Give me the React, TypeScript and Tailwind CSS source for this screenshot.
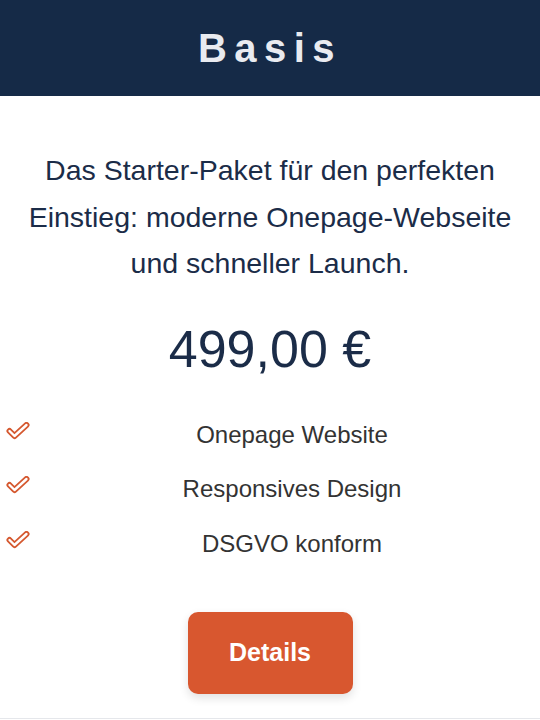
import React from 'react'

const features = ['Onepage Website', 'Responsives Design', 'DSGVO konform']

function CheckIcon() {
  return (
    <svg width="24" height="18" viewBox="0 0 24 18" className="block">
      <path d="M3.5 9 L8.5 14 L20.5 3" fill="none" stroke="#d5582f" strokeWidth="6" strokeLinecap="round" strokeLinejoin="round" />
      <path d="M3.5 9 L8.5 14 L20.5 3" fill="none" stroke="#ffffff" strokeWidth="2.4" strokeLinecap="round" strokeLinejoin="round" />
    </svg>
  )
}

export default function App() {
  return (
    <div className="w-[540px] h-[720px] bg-white overflow-hidden" style={{ fontFamily: '"Liberation Sans", Arial, sans-serif' }}>
      {/* Header */}
      <div className="h-[96px] bg-[#152a47] flex items-center justify-center">
        <h1 className="text-[40px] font-bold tracking-[7.5px] text-[#e9ebf0]">Basis</h1>
      </div>

      <div className="border-b border-[#e5e7eb] pb-[24px]">
        {/* Description */}
        <p className="pt-[51px] px-[24px] text-center text-[28.5px] leading-[46.5px] text-[#1b2c48]">
          Das Starter-Paket für den perfekten Einstieg: moderne Onepage-Webseite und schneller Launch.
        </p>

        {/* Price */}
        <div className="mt-[32px] text-center text-[52px] leading-[60px] text-[#1b2c48]">499,00 €</div>

        {/* Features */}
        <ul className="mt-[29px]">
          {features.map((f) => (
            <li key={f} className="flex items-center h-[54.5px]">
              <div className="w-[44px] pl-[6px] -mt-[8px]">
                <CheckIcon />
              </div>
              <span className="flex-1 text-center text-[24px] text-[#333333]">{f}</span>
            </li>
          ))}
        </ul>

        {/* Button */}
        <div className="mt-[41px] flex justify-center">
          <button className="w-[165px] h-[82px] rounded-[10px] bg-[#d8572f] text-white text-[25px] font-bold shadow-[0_4px_10px_rgba(0,0,0,0.12)]">
            Details
          </button>
        </div>
      </div>
    </div>
  )
}
